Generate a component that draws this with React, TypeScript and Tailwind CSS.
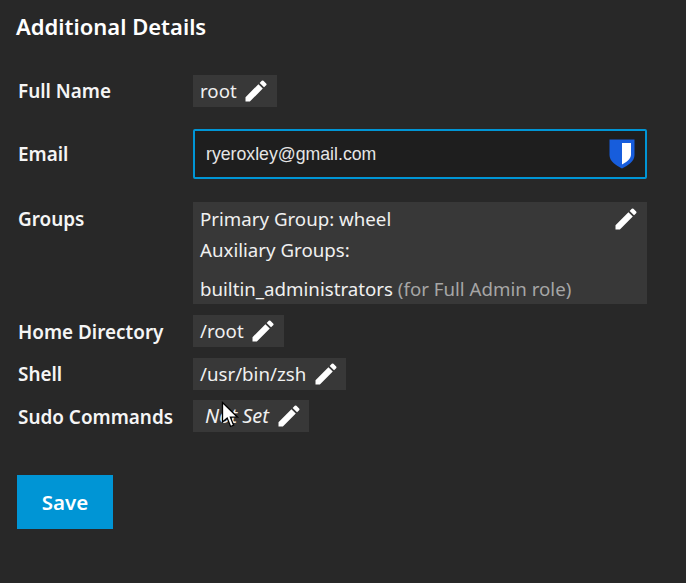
const Pencil = ({ className = "" }: { className?: string }) => (
  <svg viewBox="0 0 24 24" className={`w-7 h-7 shrink-0 fill-white ${className}`} aria-hidden="true">
    <path d="M3 17.25V21h3.75L17.81 9.94l-3.75-3.75L3 17.25zM20.71 7.04a.996.996 0 0 0 0-1.41l-2.34-2.34a.996.996 0 0 0-1.41 0l-1.83 1.83 3.75 3.75 1.83-1.83z" />
  </svg>
);

const Shield = () => (
  <svg viewBox="0 0 26 30" className="w-[26px] h-[30px]" aria-hidden="true">
    <path d="M0.5 0.5H25.5V16C25.5 22.5 19 26.5 13 29.5C7 26.5 0.5 22.5 0.5 16Z" fill="#175ddc" />
    <path d="M13 4H22V15.5C22 20 17.5 23 13 25.5Z" fill="#ffffff" />
  </svg>
);

const Chip = ({ children, italic = false }: { children: React.ReactNode; italic?: boolean }) => (
  <div className={`h-8 flex items-center bg-[#383838] text-[#f0f0f0] ${italic ? "italic text-[20px] pl-3 pr-[6px] gap-[6px]" : "text-[18.7px] pl-[7px] pr-[6.5px] gap-[5.5px]"}`}>
    <span>{children}</span>
    <Pencil />
  </div>
);

const Label = ({ children }: { children: React.ReactNode }) => (
  <div className="w-[175px] shrink-0 text-[18.9px] font-semibold text-[#f5f5f5]">{children}</div>
);

export default function App() {
  return (
    <div
      className="relative w-[686px] h-[583px] overflow-hidden bg-[#282828] pl-[17px] pt-[12px] leading-none"
      style={{ fontFamily: '"Noto Sans", "Liberation Sans", sans-serif' }}
    >
      <h2 className="text-[22px] leading-[28px] font-semibold text-white -ml-px">Additional Details</h2>

      <div className="flex items-center mt-[35px] ml-px">
        <Label>Full Name</Label>
        <Chip>root</Chip>
      </div>

      <div className="flex items-center mt-[22px] ml-px">
        <Label>Email</Label>
        <div className="w-[454px] h-[50px] rounded-[2px] border-2 border-[#0095d5] bg-[#1e1e1e] flex items-center justify-between pl-[11px] pr-[10px]">
          <span className="text-[17.7px] pt-[2px] text-[#e6e6e6]" style={{ fontFamily: '"Liberation Sans", sans-serif' }}>ryeroxley@gmail.com</span>
          <Shield />
        </div>
      </div>

      <div className="flex mt-[23px] ml-px">
        <div className="pt-[8px]"><Label>Groups</Label></div>
        <div className="relative w-[454px] h-[102px] bg-[#383838] pl-[7px] pt-[3px] text-[18.7px] text-[#f0f0f0]">
          <div className="leading-[27px]">Primary Group: wheel</div>
          <div className="leading-[27px] mt-[4px]">Auxiliary Groups:</div>
          <div className="leading-[27px] mt-[12px]">
            builtin_administrators <span className="text-[#a6a6a6]">(for Full Admin role)</span>
          </div>
          <Pencil className="absolute top-[3px] right-[7px]" />
        </div>
      </div>

      <div className="flex items-center mt-[11px] ml-px">
        <div className="pt-[2px]"><Label>Home Directory</Label></div>
        <Chip>/root</Chip>
      </div>
      <div className="flex items-center mt-[11px] ml-px">
        <Label>Shell</Label>
        <Chip>/usr/bin/zsh</Chip>
      </div>
      <div className="flex items-center mt-[10px] ml-px">
        <div className="pt-[2px]"><Label>Sudo Commands</Label></div>
        <Chip italic>Not Set</Chip>
      </div>

      <button className="block w-24 h-[54px] mt-[43px] bg-[#0095d5] text-white text-[20.5px] font-semibold">Save</button>

      <svg viewBox="0 0 19 27" className="absolute left-[221px] top-[401px] w-[19px] h-[27px]" aria-hidden="true">
        <path d="M1.5 1.5V21L6.2 17L9.6 25.5L12.6 24.2L9.4 16.2H16.5Z" fill="#ffffff" stroke="#000000" strokeWidth="1.3" />
      </svg>
    </div>
  );
}
